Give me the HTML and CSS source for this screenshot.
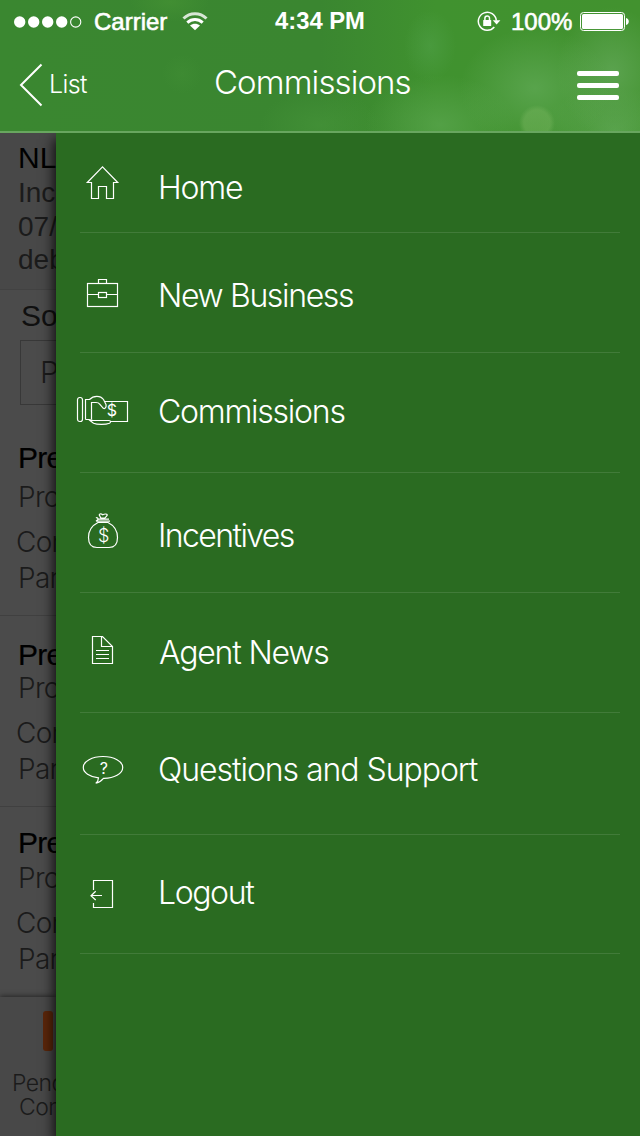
FILE: index.html
```html
<!DOCTYPE html>
<html lang="en">
	<head>
		<meta charset="utf-8">
		<title>Commissions</title>
		<link rel="stylesheet" href="styles.css">
	</head>
	<body>
		<header class="header">
			<div class="status-bar">
				<svg class="signal" width="68" height="12" viewBox="0 0 68 12">
					<circle cx="5.7" cy="6" r="5.7"/>
					<circle cx="19.7" cy="6" r="5.7"/>
					<circle cx="33.7" cy="6" r="5.7"/>
					<circle cx="47.7" cy="6" r="5.7"/>
					<circle class="empty" cx="61.7" cy="6" r="5.1"/>
				</svg>
				<span class="carrier">Carrier</span>
				<svg class="wifi" width="26" height="19" viewBox="0 0 26 19">
					<path class="arc faint" d="M1.5 6.5C8 .1 18 .1 24.5 6.5"/>
					<path class="arc" d="M5.3 10.6C9.8 6.6 16.2 6.6 20.7 10.6"/>
					<path d="M13 18.2L8 13.5C11 11.2 15 11.2 18 13.5Z"/>
				</svg>
				<span class="time">4:34 PM</span>
				<svg class="lock" width="24" height="21" viewBox="0 0 24 21">
					<path class="ring" d="M17.3 16A9 9 0 1 1 19.3 9.5"/>
					<path d="M15.8 9.3H23.4L19.6 13.6Z"/>
					<rect x="6.2" y="9" width="8" height="6" rx=".5"/>
					<path class="shackle" d="M7.9 9V7.2A2.3 2.3 0 0 1 12.5 7.2V9"/>
				</svg>
				<span class="percent">100%</span>
				<svg class="battery" width="49" height="19" viewBox="0 0 49 19">
					<rect class="case" x=".5" y=".5" width="44" height="18" rx="3"/>
					<rect x="2" y="2" width="41" height="15" rx="1.5"/>
					<path d="M46 6C49.7 6.6 49.7 12.4 46 13Z"/>
				</svg>
			</div>
			<nav class="nav-bar">
				<a class="back">
					<svg width="24" height="44" viewBox="0 0 24 44"><path d="M22.5 1.5L2 22L22.5 42.5"/></svg>
					<span>List</span>
				</a>
				<h1>Commissions</h1>
				<div class="menu-button"><i></i><i></i><i></i></div>
			</nav>
		</header>

		<main class="page">
			<section class="notice">
				<h2>NL</h2>
				<p>Inc</p>
				<p>07/</p>
				<p>deb</p>
			</section>
			<section class="sort">
				<label>So</label>
				<div class="select">P</div>
			</section>
			<section class="record first">
				<h3>Pre</h3>
				<p>Pro</p>
				<p class="wide">Con</p>
				<p>Par</p>
			</section>
			<section class="record second">
				<h3>Pre</h3>
				<p>Pro</p>
				<p class="wide">Con</p>
				<p>Par</p>
			</section>
			<section class="record third">
				<h3>Pre</h3>
				<p>Pro</p>
				<p class="wide">Con</p>
				<p>Par</p>
			</section>
			<footer class="tab-bar">
				<div class="bar-icon"></div>
				<span>Pend</span>
				<span class="indent">Con</span>
			</footer>
		</main>

		<aside class="drawer">
			<ul class="menu">
				<li class="home">
					<svg viewBox="0 0 56 40"><path d="M26.5 .9L11.3 16.5H15.5V32.5H22.5V20.5H30.5V32.5H37.5V16.5H41.7Z"/></svg>
					<span>Home</span>
				</li>
				<li class="business">
					<svg viewBox="0 0 56 40">
						<rect x="11.5" y="9.5" width="30" height="23"/>
						<path d="M22.5 9.5V5.5H30.5V9.5M11.5 20.5H22.5M30.5 20.5H41.5"/>
						<rect x="22.5" y="18.5" width="8" height="5"/>
					</svg>
					<span>New Business</span>
				</li>
				<li class="commissions">
					<svg viewBox="0 0 56 40">
						<rect x="1.5" y="7.5" width="5" height="24" rx="2.2"/>
						<path d="M9.5 29.5V9.5H13.5C17.5 5.3 24.5 5.3 27.5 9.5L30 14.5C30.6 17 29.2 19.2 27.3 18.3L23.5 14C22.8 12.6 22 12.5 20 12.5H15.5V29.5"/>
						<path d="M29 11.5H51.5V31.5H34"/>
						<path d="M9.5 29.5H13L17 30.5H33C35 30.5 34.8 32.5 33.5 33.3C29.5 34.9 21 34.8 17.5 33.3L13 29.8"/>
						<text class="dollar bold" x="35.3" y="26.3">$</text>
					</svg>
					<span>Commissions</span>
				</li>
				<li class="incentives">
					<svg viewBox="0 0 56 40">
						<path d="M22 8.5C16 11.5 12.5 17 12.5 23.5C12.5 30 15 33.5 21 33.5H33C39 33.5 41.5 30 41.5 23.5C41.5 17 38 11.5 32 8.5Z"/>
						<path d="M20 7.2H34M21.5 5.2H33M20 4C21 3 22.5 4.5 21.5 5.2M20 7.2L22.3 5.2M24.8 4L23.3 1C23.2 -.6 25.5 -.5 26.8 .8C28.5 -.3 31 -.2 31.3 .8C31.4 1.8 29.8 2.7 29 4Z"/>
						<text class="dollar" x="26.8" y="27.7">$</text>
					</svg>
					<span>Incentives</span>
				</li>
				<li class="news">
					<svg viewBox="0 0 56 40"><path d="M16.5 5.5H26.5L36.5 15.5V32.5H16.5ZM25.5 5.5V15.5H36.5M20 19.5H33M20 23.5H33M20 27.5H33"/></svg>
					<span>Agent News</span>
				</li>
				<li class="support">
					<svg viewBox="0 0 56 40">
						<path d="M22.5 29.8C13.5 28.9 7.3 24.6 7.3 19.5C7.3 13.3 16 8.5 27 8.5S46.7 13.3 46.7 19.5S38 30.5 27.5 30.3C25 33.2 22.6 34.8 19.8 35.2C21.8 33.7 22.4 32 22.5 29.8Z"/>
						<text class="question" x="27.2" y="25.6">?</text>
					</svg>
					<span>Questions and Support</span>
				</li>
				<li class="logout">
					<svg viewBox="0 0 56 40"><path d="M17.5 19V9.5H36.5V36.5H17.5V32M26 24.5H15M19.7 20.3L15 24.7L19.7 29"/></svg>
					<span>Logout</span>
				</li>
			</ul>
		</aside>
	</body>
</html>
```
FILE: styles.css
```css
body {
	margin: 0;
	width: 640px;
	height: 1136px;
	position: relative;
	overflow: hidden;
	background-color: #4b4b4b;
	font-family: Inter, "Liberation Sans", sans-serif;
	font-weight: 300;
}

h1, h2, h3, p, ul {
	margin: 0;
	padding: 0;
	font-weight: inherit;
}

.header {
	box-sizing: border-box;
	height: 133px;
	border-bottom: 2px solid #68a65f;
	color: #ffffff;
	background:
		radial-gradient(circle at 537px 123px, rgba(119, 181, 94, 0.45) 0 13px, transparent 18px),
		radial-gradient(ellipse 75px 60px at 535px 88px, rgba(107, 178, 99, 0.55), transparent),
		radial-gradient(ellipse 55px 65px at 612px 72px, rgba(107, 174, 99, 0.6), transparent),
		radial-gradient(ellipse 75px 50px at 440px 125px, rgba(98, 172, 88, 0.55), transparent),
		radial-gradient(ellipse 26px 36px at 430px 46px, rgba(86, 166, 82, 0.4), transparent),
		radial-gradient(ellipse 75px 42px at 615px 130px, rgba(98, 170, 88, 0.65), transparent),
		radial-gradient(ellipse 60px 35px at 320px 125px, rgba(80, 160, 66, 0.35), transparent),
		radial-gradient(ellipse 40px 20px at 170px 2px, rgba(76, 154, 54, 0.4), transparent),
		radial-gradient(ellipse 20px 20px at 182px 74px, rgba(76, 154, 60, 0.2), transparent),
		linear-gradient(90deg, #3a8730 0, #3a8630 50%, #40922f 68%, #42922f 100%);
}

.header svg {
	fill: #ffffff;
	stroke: none;
}

.status-bar {
	display: flex;
	align-items: center;
	height: 43px;
	padding-left: 14px;
	font: 24px/28px "Liberation Sans", Arial, sans-serif;
}

.signal .empty {
	fill: none;
	stroke: #ffffff;
	stroke-width: 1.1;
}

.carrier, .percent {
	-webkit-text-stroke: 0.6px #ffffff;
}

.carrier {
	width: 74px;
	margin-left: 12px;
}

.wifi {
	margin-left: 14px;
}

.wifi .arc {
	fill: none;
	stroke: #ffffff;
	stroke-width: 3;
}

.wifi .faint {
	opacity: 0.8;
}

.time {
	width: 92px;
	margin-left: 67px;
	font-weight: bold;
	font-size: 23.8px;
	position: relative;
	top: -1px;
}

.lock {
	margin-left: 110px;
}

.lock .ring, .lock .shackle {
	fill: none;
	stroke: #ffffff;
	stroke-width: 1.5;
}

.percent {
	width: 63px;
	margin-left: 10px;
}

.battery {
	margin-left: 6px;
}

.battery .case {
	fill: none;
	stroke: #ffffff;
}

.nav-bar {
	display: grid;
	grid-template-columns: 195px 1fr 42px;
	padding: 20px 21px 0 19px;
}

.back {
	display: flex;
	font-size: 25px;
	line-height: 42px;
	letter-spacing: -0.6px;
}

.back svg {
	fill: none;
	stroke: #ffffff;
	stroke-width: 2;
}

.back span {
	margin-left: 6px;
}

.nav-bar h1 {
	font-size: 33px;
	line-height: 38px;
	letter-spacing: -0.9px;
}

.menu-button {
	display: flex;
	flex-direction: column;
	gap: 7px;
	padding-top: 8px;
}

.menu-button i {
	height: 5px;
	border-radius: 2px;
	background-color: #ffffff;
}

/* dimmed page under the drawer */
.page {
	width: 56px;
	height: 1003px;
	overflow: hidden;
	white-space: nowrap;
	color: #1b1b1b;
}

.notice {
	box-sizing: border-box;
	height: 157px;
	padding: 7px 0 0 18px;
	border-bottom: 1px solid #424242;
	background-color: #484848;
	font: 28px/33.6px "Liberation Sans", Arial, sans-serif;
}

.notice h2 {
	color: #000000;
	font-size: 30px;
	line-height: 36px;
}

.sort {
	height: 142px;
	padding-top: 8px;
	font: 30px/36px "Liberation Sans", Arial, sans-serif;
}

.sort label {
	display: block;
	padding-left: 21px;
	color: #101010;
}

.select {
	box-sizing: border-box;
	width: 600px;
	height: 65px;
	margin: 6px 0 0 20px;
	padding-left: 19px;
	border: 1px solid #383838;
	font: 300 30px/63px Inter, sans-serif;
}

.record {
	box-sizing: border-box;
	padding-left: 18px;
	border-bottom: 1px solid #404040;
	font-size: 28px;
	line-height: 36px;
	letter-spacing: -0.7px;
}

.record h3 {
	color: #000000;
	font: 30px/36px "Liberation Sans", Arial, sans-serif;
	-webkit-text-stroke: 0.2px #000000;
}

.record .wide {
	margin: 9px 0 0 -2px;
}

.first {
	height: 176px;
}

.first h3 {
	margin-bottom: 3px;
}

.second {
	height: 191px;
	padding-top: 21px;
}

.second h3 {
	margin-bottom: -3px;
}

.third {
	height: 190px;
	padding-top: 18px;
	border-bottom: 0;
}

.third h3 {
	margin-bottom: -1px;
}

.tab-bar {
	display: flex;
	flex-direction: column;
	height: 139px;
	padding-left: 12px;
	background-color: #484848;
	box-shadow: 0 -1px 5px rgba(0, 0, 0, 0.5);
	font-size: 23px;
	line-height: 24px;
	letter-spacing: -0.6px;
}

.bar-icon {
	width: 10px;
	height: 40px;
	margin: 14px 0 20px 31px;
	border-radius: 3px;
	background-color: #5a260a;
}

.indent {
	margin-left: 7px;
}

.drawer {
	position: absolute;
	top: 133px;
	left: 56px;
	width: 584px;
	height: 1003px;
	background-color: #2a6b21;
	box-shadow: -2px 6px 12px rgba(0, 0, 0, 0.85);
	clip-path: inset(0 0 0 -30px);
}

.menu {
	margin: 0 20px 0 24px;
	list-style: none;
	color: #ffffff;
	font-size: 32px;
	line-height: 40px;
}

.menu li {
	box-sizing: border-box;
	display: flex;
	align-items: flex-start;
	height: 120px;
	border-bottom: 1px solid #417b39;
}

.menu svg {
	flex: none;
	width: 56px;
	height: 40px;
	margin: 0 25px 0 -4px;
	overflow: visible;
	fill: none;
	stroke: #ffffff;
	stroke-width: 1.2;
}

.menu span {
	padding: 2px 0 0 1px;
}

.menu text {
	fill: #ffffff;
	stroke: none;
	text-anchor: middle;
}

.menu .dollar {
	font-size: 18px;
}

.menu .bold {
	font-size: 16px;
	font-weight: 400;
}

.menu .question {
	font-size: 16px;
	font-weight: 400;
}

.menu .home {
	height: 100px;
	padding-top: 33px;
	letter-spacing: -1.2px;
}

.menu .business {
	padding-top: 41px;
	letter-spacing: -1.35px;
}

.menu .commissions {
	padding-top: 37px;
	letter-spacing: -1.25px;
}

.menu .incentives {
	padding-top: 41px;
	letter-spacing: -1.6px;
}

.menu .news {
	padding-top: 38px;
	letter-spacing: -1.2px;
}

.menu .news span {
	padding-left: 2px;
}

.menu .support {
	height: 122px;
	padding-top: 35px;
	letter-spacing: -1.05px;
}

.menu .logout {
	height: 119px;
	padding-top: 36px;
	letter-spacing: -1.4px;
}
```
